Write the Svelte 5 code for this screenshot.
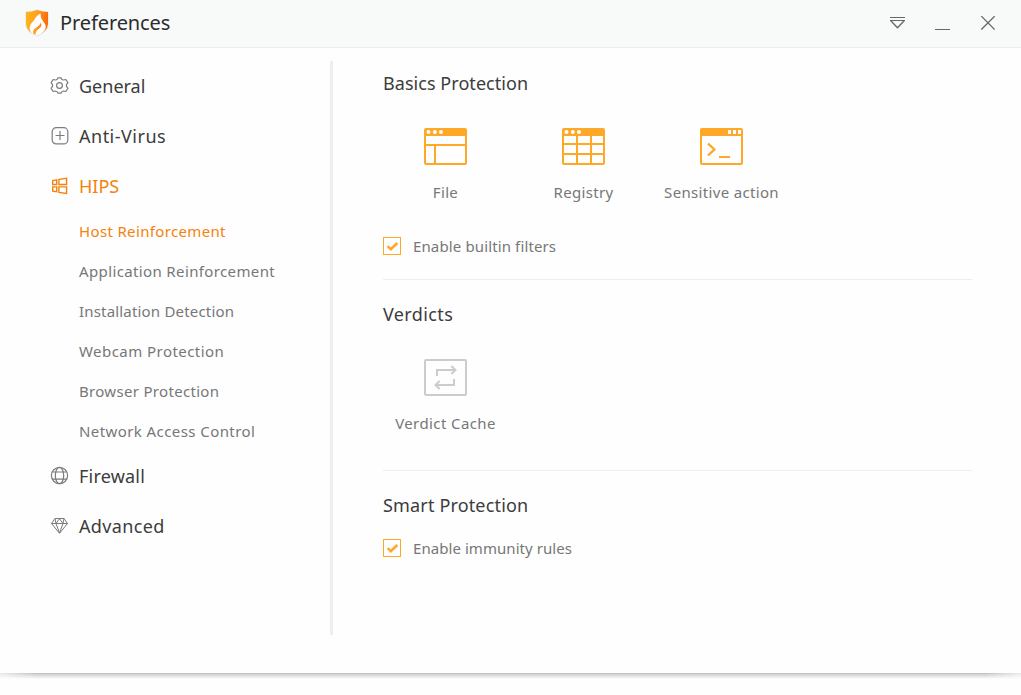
<script>
	const submenu = [
		{ label: 'Host Reinforcement', spacing: 0.35 },
		{ label: 'Application Reinforcement', spacing: 0.37 },
		{ label: 'Installation Detection', spacing: 0.18 },
		{ label: 'Webcam Protection', spacing: 0.45 },
		{ label: 'Browser Protection', spacing: 0.31 },
		{ label: 'Network Access Control', spacing: 0.42 }
	];

	let active = $state('Host Reinforcement');
	let builtinFilters = $state(true);
	let immunityRules = $state(true);
</script>

<svelte:head>
	<title>Preferences</title>
</svelte:head>

{#snippet check(on)}
	<span class="box">
		{#if on}
			<svg width="18" height="18" viewBox="0 0 18 18">
				<path d="M4.6 9.2 L7.8 12.2 L14.3 6" fill="none" stroke="#ffa726" stroke-width="2.5" />
			</svg>
		{/if}
	</span>
{/snippet}

<div class="window">
	<header>
		<svg class="logo" width="24" height="28" viewBox="0 0 24 28">
			<defs>
				<linearGradient id="shield" x1="0" y1="0" x2="1" y2="0.15">
					<stop offset="0" stop-color="#ffb51b" />
					<stop offset="0.5" stop-color="#ffa31a" />
					<stop offset="0.75" stop-color="#ff8112" />
					<stop offset="1" stop-color="#f96d0c" />
				</linearGradient>
			</defs>
			<path d="M12 0.3 Q17 2.5 23.7 2.5 V15 Q23.5 23.5 12 27.7 Q0.5 23.5 0.3 15 V2.5 Q7 2.5 12 0.3Z" fill="#eee9df" />
			<path d="M12 1 Q17 3.1 23 3.1 V15 Q22.5 22.5 12 26.5 Q1.5 22.5 1 15 V3.1 Q7 3.1 12 1Z" fill="url(#shield)" />
			<path
				d="M15.6 4.2 C10.5 7 10.5 10 7.5 13 C4.2 16.5 3.8 20 6.2 23.2 C7 24.5 7.8 25 8.6 25.3 C7.3 22 8.8 20 11.5 18.3 C14 16.7 15.6 15.5 15.8 13.2 C17 16 16.2 18 13.8 19.8 C11 22 10 23.6 10.8 27 Q16 25.8 19 22.2 C22 18.5 20.8 15.5 18.8 13.2 C16.3 10.3 15.3 7.5 15.6 4.2Z"
				fill="#fff"
			/>
		</svg>
		<h1>Preferences</h1>
		<div class="controls">
			<button aria-label="Menu">
				<svg width="15" height="15" viewBox="0 0 15 15">
					<path d="M0 2.5H15 M0 5.5H15" />
					<path d="M0.8 5.7L7.5 12.8L14.2 5.7" stroke-width="1.3" />
				</svg>
			</button>
			<button aria-label="Minimize">
				<svg width="15" height="15" viewBox="0 0 15 15"><path d="M0 14.5H15" /></svg>
			</button>
			<button aria-label="Close">
				<svg width="15" height="15" viewBox="0 0 15 15">
					<path d="M1.3 1.1L14.7 14.5 M14.7 1.1L1.3 14.5" stroke-width="1.3" />
				</svg>
			</button>
		</div>
	</header>

	<div class="content">
		<nav>
			<a href="#general" class="item general">
				<svg width="18" height="18" viewBox="0 0 18 18">
					<path
						d="M6.9 0.8 H10.1 Q10.7 3 12.3 3 L14.8 2.5 L16.9 5.7 Q15.3 7.2 15.3 8.5 Q15.3 9.8 16.9 11.3 L14.8 14.5 L12.3 14 Q10.7 14 10.1 16.2 H6.9 Q6.3 14 4.7 14 L2.2 14.5 L0.1 11.3 Q1.7 9.8 1.7 8.5 Q1.7 7.2 0.1 5.7 L2.2 2.5 L4.7 3 Q6.3 3 6.9 0.8Z"
						stroke-linejoin="round"
					/>
					<circle cx="8.5" cy="8.5" r="2.9" />
				</svg>
				<span>General</span>
			</a>
			<a href="#antivirus" class="item antivirus">
				<svg width="18" height="18" viewBox="0 0 18 18">
					<rect x="1.2" y="0.7" width="15.6" height="16.2" rx="4" />
					<path d="M9 4V13 M4.6 8.5H13.5" />
				</svg>
				<span>Anti-Virus</span>
			</a>
			<a href="#hips" class="item hips on">
				<svg width="18" height="18" viewBox="0 0 18 18">
					<path
						d="M1.7 3.6L5.7 2.9V7.5H1.7Z M7.9 2.4L15.6 1.2V7.5H7.9Z M1.7 9.9H5.7V14.8L1.7 14.2Z M7.9 9.9H15.6V16.4L7.9 15.4Z"
						stroke-width="1.4"
					/>
				</svg>
				<span>HIPS</span>
			</a>
			<ul>
				{#each submenu as entry}
					<li>
						<button
							class:on={active === entry.label}
							style:letter-spacing="{entry.spacing}px"
							onclick={() => (active = entry.label)}>{entry.label}</button
						>
					</li>
				{/each}
			</ul>
			<a href="#firewall" class="item firewall">
				<svg width="18" height="18" viewBox="0 0 18 18">
					<circle cx="8.5" cy="8.5" r="8.1" />
					<ellipse cx="8.5" cy="8.5" rx="4.2" ry="8.1" />
					<path d="M1.3 5H15.7 M1.3 12.2H15.7" />
				</svg>
				<span>Firewall</span>
			</a>
			<a href="#advanced" class="item advanced">
				<svg width="18" height="18" viewBox="0 0 18 18">
					<path
						d="M4 1.5H13L16.5 6.5L8.5 16.3L0.5 6.5Z M0.5 6.5H16.5 M5 6.5L8.5 1.7L12 6.5L8.5 16Z M4 1.5L5 6.5 M13 1.5L12 6.5"
						stroke-width="1"
					/>
				</svg>
				<span>Advanced</span>
			</a>
		</nav>

		<main>
			<section class="basics">
				<h2>Basics Protection</h2>
				<div class="tiles">
					<button class="tile">
						<svg width="43" height="37" viewBox="0 0 43 37">
							<rect x="1" y="1" width="41" height="35" rx="1" />
							<path class="fill" d="M1 1H42V8H1Z" />
							<path d="M1 17H42 M11 17V36" />
							<g class="dots">
								<circle cx="4.5" cy="4" r="2" />
								<circle cx="10.8" cy="4" r="2" />
								<circle cx="17" cy="4" r="2" />
							</g>
						</svg>
						<span>File</span>
					</button>
					<button class="tile">
						<svg width="43" height="37" viewBox="0 0 43 37">
							<rect x="1" y="1" width="41" height="35" rx="1" />
							<path class="fill" d="M1 1H42V8H1Z" />
							<path d="M1 16H42 M1 26H42 M15 8V36 M29 8V36" />
							<g class="dots">
								<circle cx="4.5" cy="4" r="2" />
								<circle cx="10.8" cy="4" r="2" />
								<circle cx="17" cy="4" r="2" />
							</g>
						</svg>
						<span>Registry</span>
					</button>
					<button class="tile">
						<svg width="43" height="37" viewBox="0 0 43 37">
							<rect x="1" y="1" width="41" height="35" rx="1" />
							<path class="fill" d="M1 1H42V8H1Z" />
							<path class="dots" d="M28 2h3v4h-3z M33 2h3v4h-3z M38 2h3v4h-3z" />
							<path d="M8 15.5L14.3 21.5L8 27.5" stroke-width="2.4" />
							<path d="M19 29H30" />
						</svg>
						<span>Sensitive action</span>
					</button>
				</div>
				<label class="option">
					<input type="checkbox" bind:checked={builtinFilters} />
					{@render check(builtinFilters)}
					<span class="filters">Enable builtin filters</span>
				</label>
			</section>

			<section class="verdicts">
				<h2>Verdicts</h2>
				<div class="tiles">
					<button class="tile gray">
						<svg width="43" height="37" viewBox="0 0 43 37">
							<rect x="1" y="1" width="41" height="35" rx="1" />
							<path d="M13 17V11H31 M27.3 7L31.5 11L27.3 15 M30 20V26H12 M15.7 22L11.5 26L15.7 30" />
						</svg>
						<span>Verdict Cache</span>
					</button>
				</div>
			</section>

			<section class="smart">
				<h2>Smart Protection</h2>
				<label class="option">
					<input type="checkbox" bind:checked={immunityRules} />
					{@render check(immunityRules)}
					<span class="rules">Enable immunity rules</span>
				</label>
			</section>
		</main>
	</div>
	<div class="shadow"></div>
</div>

<style>
	:global(body) {
		margin: 0;
		background: #fefefe;
	}
	.window {
		width: 1021px;
		height: 695px;
		overflow: hidden;
		font-family: 'Noto Sans', 'Open Sans', sans-serif;
		color: #3c3c3c;
	}
	button {
		padding: 0;
		border: 0;
		background: none;
		font: inherit;
		color: inherit;
		cursor: pointer;
	}
	svg {
		display: block;
		flex: none;
	}
	header {
		box-sizing: border-box;
		display: flex;
		align-items: center;
		height: 48px;
		padding: 0 26px 2px 25px;
		background: #f7faf9;
		border-bottom: 1px solid #ebeeed;
	}
	h1 {
		margin: 0 0 0 11px;
		font-size: 20px;
		font-weight: 400;
		line-height: 28px;
		letter-spacing: -0.1px;
		color: #2c2c2c;
	}
	.controls {
		display: flex;
		gap: 30px;
		margin-left: auto;
	}
	.controls svg {
		fill: none;
		stroke: #666;
		stroke-width: 1;
	}
	.content {
		display: flex;
		height: 625px;
	}
	nav {
		box-sizing: border-box;
		width: 333px;
		height: 574px;
		margin-top: 13px;
		border-right: 3px solid #eee;
	}
	.item {
		display: flex;
		align-items: center;
		gap: 10px;
		height: 50px;
		padding-left: 51px;
		font-size: 18px;
		color: #3c3c3c;
		text-decoration: none;
	}
	.antivirus {
		letter-spacing: 0.5px;
	}
	.firewall {
		letter-spacing: 0.2px;
	}
	.advanced {
		letter-spacing: 0.35px;
	}
	.item svg {
		overflow: visible;
		fill: none;
		stroke: #7c7c7c;
		stroke-width: 1.2;
	}
	.item.on {
		color: #f5820b;
	}
	.item.on svg {
		stroke: #f5820b;
	}
	ul {
		margin: 0;
		padding: 0 0 0 79px;
		list-style: none;
	}
	li {
		height: 40px;
	}
	li button {
		font-size: 15px;
		line-height: 40px;
		color: #777;
		white-space: nowrap;
	}
	li button.on {
		color: #f5820b;
	}
	main {
		width: 589px;
		margin-left: 50px;
	}
	section {
		box-sizing: border-box;
		border-bottom: 1px solid #eee;
	}
	.basics {
		height: 232px;
		padding-top: 21px;
	}
	.verdicts {
		height: 191px;
		padding-top: 20px;
	}
	.smart {
		padding-top: 20px;
		border: 0;
	}
	h2 {
		margin: 0;
		font-size: 18px;
		font-weight: 400;
		line-height: 28px;
		letter-spacing: 0.05px;
	}
	.verdicts h2 {
		letter-spacing: 0.38px;
	}
	.smart h2 {
		letter-spacing: 0.16px;
	}
	.tiles {
		display: flex;
		gap: 13px;
		margin: 31px 0 0;
	}
	.tile {
		display: flex;
		flex-direction: column;
		align-items: center;
		width: 125px;
		font-size: 15px;
		line-height: 22px;
		letter-spacing: 0.33px;
		color: #777;
		white-space: nowrap;
	}
	.tile svg {
		margin-bottom: 16px;
		fill: none;
		stroke: #ffa726;
		stroke-width: 2;
	}
	.tile .fill {
		fill: #ffa726;
		stroke: none;
	}
	.tile .dots {
		fill: #fff;
		stroke: none;
	}
	.tile.gray {
		letter-spacing: 0.4px;
	}
	.tile.gray svg {
		stroke: #ccc;
	}
	.option {
		display: flex;
		align-items: center;
		gap: 12px;
		height: 22px;
		font-size: 15px;
		color: #777;
	}
	.basics .option {
		margin-top: 32px;
	}
	.smart .option {
		margin-top: 18px;
	}
	.filters {
		letter-spacing: 0.13px;
	}
	.rules {
		letter-spacing: 0.06px;
	}
	.option input {
		display: none;
	}
	.box {
		box-sizing: border-box;
		width: 18px;
		height: 18px;
		border: 1px solid #ffa726;
	}
	.box svg {
		margin: -1px;
	}
	.shadow {
		height: 6px;
		background: linear-gradient(to right, #fefefeaa, #fefefe00 36px, #fefefe00 985px, #fefefeaa),
			linear-gradient(#c4c4c4 1px, #cfcfcf 1px, #e2e2e2 50%, #fefefe);
	}
</style>
